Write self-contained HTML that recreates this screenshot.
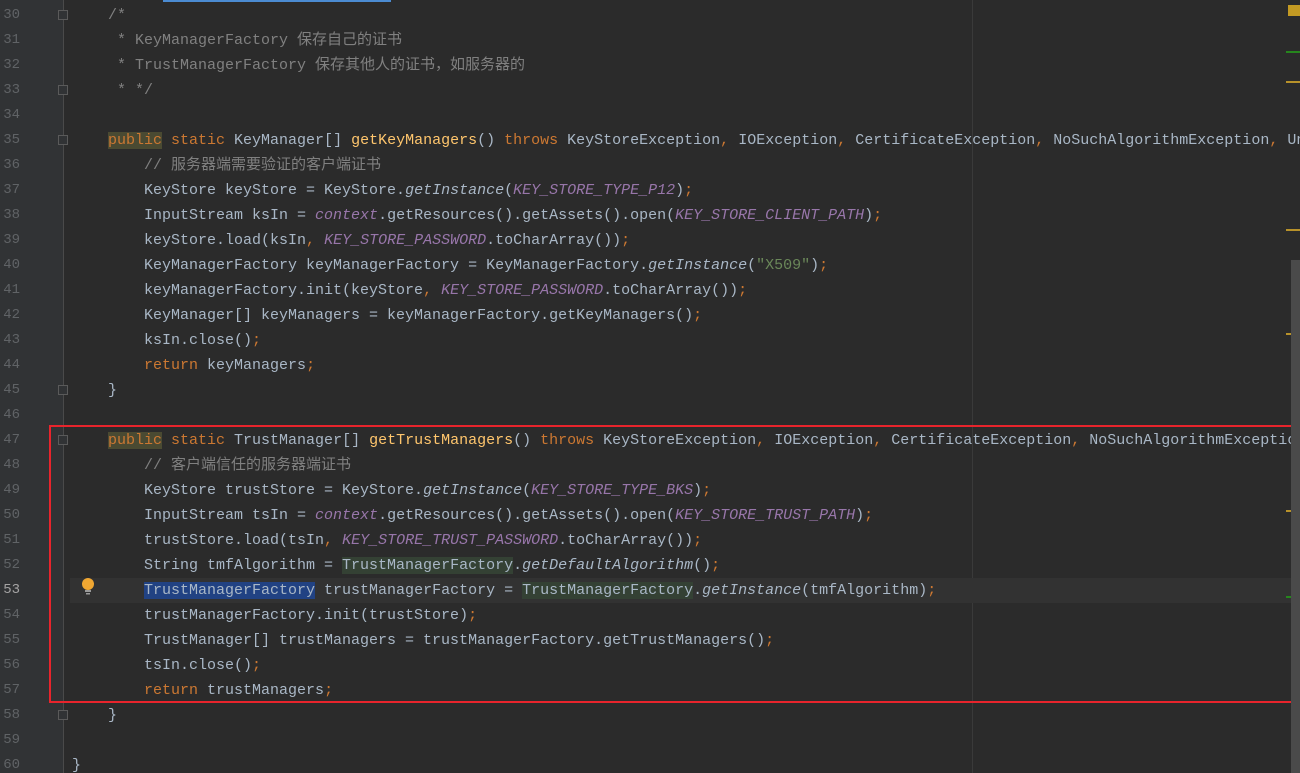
<!DOCTYPE html>
<html style="overflow:hidden"><head><meta charset="utf-8"><style>
html,body{overflow:hidden}
body{margin:0;width:1300px;height:773px;overflow:hidden;background:#2b2b2b;position:relative;font-family:"Liberation Mono","Noto Sans CJK SC",monospace;font-size:15px;}
.g{position:absolute;left:0;top:0;width:63px;height:773px;background:#313335;}
.fl{position:absolute;left:63px;top:0;width:1px;height:773px;background:#4a4a4a;}
.l{position:absolute;left:0;height:25px;line-height:25px;width:1300px;white-space:pre;color:#a9b7c6;overflow:hidden;}
.n{position:absolute;left:0;width:20px;text-align:right;color:#606366;font-size:14px;}
.c{position:absolute;left:72px;}
.k{color:#cc7832}.m{color:#ffc66d}.p{color:#9876aa;font-style:italic}.s{color:#6a8759}.cm{color:#808080}.i{font-style:italic}
.gh{background:#344134}.sel{background:#214283}
.fold{position:absolute;left:58px;width:10px;height:10px;border:1px solid #5a5a5a;box-sizing:border-box;background:#313335}
.kw{background:#4a4a32}
</style></head><body>
<div class="g"></div><div class="fl"></div>
<div style="position:absolute;left:163px;top:0;width:228px;height:2px;background:#4b8bd2"></div>
<div style="position:absolute;left:972px;top:0;width:1px;height:773px;background:#3a3a3a"></div>
<div style="position:absolute;left:70px;top:578px;width:1230px;height:25px;background:#323232"></div>
<div class="fold" style="top:10px"></div><div class="fold" style="top:85px"></div><div class="fold" style="top:135px"></div><div class="fold" style="top:385px"></div><div class="fold" style="top:435px"></div><div class="fold" style="top:710px"></div>
<div class="l" style="top:3px"><span class="n">30</span><span class="c cm">    /*</span></div>
<div class="l" style="top:28px"><span class="n">31</span><span class="c cm">     * KeyManagerFactory 保存自己的证书</span></div>
<div class="l" style="top:53px"><span class="n">32</span><span class="c cm">     * TrustManagerFactory 保存其他人的证书，如服务器的</span></div>
<div class="l" style="top:78px"><span class="n">33</span><span class="c cm">     * */</span></div>
<div class="l" style="top:103px"><span class="n">34</span></div>
<div class="l" style="top:128px"><span class="n">35</span><span class="c">    <span class="k kw">public</span><span class="k"> static </span>KeyManager[] <span class="m">getKeyManagers</span>() <span class="k">throws </span>KeyStoreException<span class="k">, </span>IOException<span class="k">, </span>CertificateException<span class="k">, </span>NoSuchAlgorithmException<span class="k">, </span>Un</span></div>
<div class="l" style="top:153px"><span class="n">36</span><span class="c cm">        // 服务器端需要验证的客户端证书</span></div>
<div class="l" style="top:178px"><span class="n">37</span><span class="c">        KeyStore keyStore = KeyStore.<span class="i">getInstance</span>(<span class="p">KEY_STORE_TYPE_P12</span>)<span class="k">;</span></span></div>
<div class="l" style="top:203px"><span class="n">38</span><span class="c">        InputStream ksIn = <span class="p">context</span>.getResources().getAssets().open(<span class="p">KEY_STORE_CLIENT_PATH</span>)<span class="k">;</span></span></div>
<div class="l" style="top:228px"><span class="n">39</span><span class="c">        keyStore.load(ksIn<span class="k">, </span><span class="p">KEY_STORE_PASSWORD</span>.toCharArray())<span class="k">;</span></span></div>
<div class="l" style="top:253px"><span class="n">40</span><span class="c">        KeyManagerFactory keyManagerFactory = KeyManagerFactory.<span class="i">getInstance</span>(<span class="s">"X509"</span>)<span class="k">;</span></span></div>
<div class="l" style="top:278px"><span class="n">41</span><span class="c">        keyManagerFactory.init(keyStore<span class="k">, </span><span class="p">KEY_STORE_PASSWORD</span>.toCharArray())<span class="k">;</span></span></div>
<div class="l" style="top:303px"><span class="n">42</span><span class="c">        KeyManager[] keyManagers = keyManagerFactory.getKeyManagers()<span class="k">;</span></span></div>
<div class="l" style="top:328px"><span class="n">43</span><span class="c">        ksIn.close()<span class="k">;</span></span></div>
<div class="l" style="top:353px"><span class="n">44</span><span class="c">        <span class="k">return </span>keyManagers<span class="k">;</span></span></div>
<div class="l" style="top:378px"><span class="n">45</span><span class="c">    }</span></div>
<div class="l" style="top:403px"><span class="n">46</span></div>
<div class="l" style="top:428px"><span class="n">47</span><span class="c">    <span class="k kw">public</span><span class="k"> static </span>TrustManager[] <span class="m">getTrustManagers</span>() <span class="k">throws </span>KeyStoreException<span class="k">, </span>IOException<span class="k">, </span>CertificateException<span class="k">, </span>NoSuchAlgorithmExceptio</span></div>
<div class="l" style="top:453px"><span class="n">48</span><span class="c cm">        // 客户端信任的服务器端证书</span></div>
<div class="l" style="top:478px"><span class="n">49</span><span class="c">        KeyStore trustStore = KeyStore.<span class="i">getInstance</span>(<span class="p">KEY_STORE_TYPE_BKS</span>)<span class="k">;</span></span></div>
<div class="l" style="top:503px"><span class="n">50</span><span class="c">        InputStream tsIn = <span class="p">context</span>.getResources().getAssets().open(<span class="p">KEY_STORE_TRUST_PATH</span>)<span class="k">;</span></span></div>
<div class="l" style="top:528px"><span class="n">51</span><span class="c">        trustStore.load(tsIn<span class="k">, </span><span class="p">KEY_STORE_TRUST_PASSWORD</span>.toCharArray())<span class="k">;</span></span></div>
<div class="l" style="top:553px"><span class="n">52</span><span class="c">        String tmfAlgorithm = <span class="gh">TrustManagerFactory</span>.<span class="i">getDefaultAlgorithm</span>()<span class="k">;</span></span></div>
<div class="l" style="top:578px"><span class="n" style="color:#a4a3a3">53</span><span class="c">        <span class="sel">TrustManagerFactory</span> trustManagerFactory = <span class="gh">TrustManagerFactory</span>.<span class="i">getInstance</span>(tmfAlgorithm)<span class="k">;</span></span></div>
<div class="l" style="top:603px"><span class="n">54</span><span class="c">        trustManagerFactory.init(trustStore)<span class="k">;</span></span></div>
<div class="l" style="top:628px"><span class="n">55</span><span class="c">        TrustManager[] trustManagers = trustManagerFactory.getTrustManagers()<span class="k">;</span></span></div>
<div class="l" style="top:653px"><span class="n">56</span><span class="c">        tsIn.close()<span class="k">;</span></span></div>
<div class="l" style="top:678px"><span class="n">57</span><span class="c">        <span class="k">return </span>trustManagers<span class="k">;</span></span></div>
<div class="l" style="top:703px"><span class="n">58</span><span class="c">    }</span></div>
<div class="l" style="top:728px"><span class="n">59</span></div>
<div class="l" style="top:753px;height:20px"><span class="n">60</span><span class="c">}</span></div>
<svg style="position:absolute;left:80px;top:577px" width="16" height="20"><circle cx="8" cy="7" r="6" fill="#f0a732"/><rect x="5" y="13" width="6" height="2" fill="#9a9a9a"/><rect x="6" y="16" width="4" height="1.5" fill="#9a9a9a"/></svg>
<div style="position:absolute;left:49px;top:425px;width:1242px;height:274px;border:2px solid #e8242c"></div>
<div style="position:absolute;left:1288px;top:5px;width:12px;height:11px;background:#c39a23"></div>
<div style="position:absolute;left:1286px;top:51px;width:14px;height:2px;background:#26861d"></div>
<div style="position:absolute;left:1286px;top:81px;width:14px;height:2px;background:#b8922a"></div>
<div style="position:absolute;left:1286px;top:229px;width:14px;height:2px;background:#b8922a"></div>
<div style="position:absolute;left:1286px;top:333px;width:14px;height:2px;background:#b8922a"></div>
<div style="position:absolute;left:1286px;top:510px;width:14px;height:2px;background:#b8922a"></div>
<div style="position:absolute;left:1286px;top:596px;width:14px;height:2px;background:#26861d"></div>
<div style="position:absolute;left:1291px;top:260px;width:9px;height:513px;background:#4a4a4a"></div>
</body></html>
